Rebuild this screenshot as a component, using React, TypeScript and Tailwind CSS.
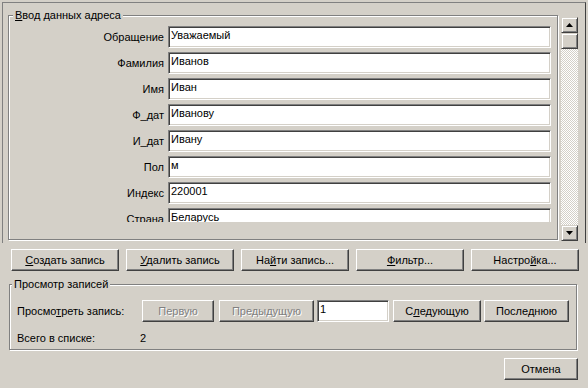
/* Классический диалог Windows: ввод данных адреса */

import type { ReactNode } from 'react';

const FIELDS: [ReactNode, string][] = [
  ['Обращение', 'Уважаемый'],
  ['Фамилия', 'Иванов'],
  ['Имя', 'Иван'],
  ['Ф_дат', 'Иванову'],
  ['И_дат', 'Ивану'],
  ['Пол', 'м'],
  ['Индекс', '220001'],
  ['Страна', 'Беларусь'],
];

/* ── Raised 3D button ──────────────────────────────── */

function Btn({ children, className = '', disabled = false }: { children: ReactNode; className?: string; disabled?: boolean }) {
  return (
    <div
      className={`flex h-[22px] shrink-0 items-center justify-center border border-t-white border-l-white border-r-[#404040] border-b-[#404040] shadow-[inset_-1px_-1px_0_#808080] ${
        disabled ? 'text-[#808080] [text-shadow:1px_1px_0_#fff]' : 'text-black'
      } ${className}`}
    >
      <span className="leading-[13px]">{children}</span>
    </div>
  );
}

/* ── Sunken text box ───────────────────────────────── */

function Field({ value, className = '' }: { value: string; className?: string }) {
  return (
    <div
      className={`h-[22px] shrink-0 border border-t-[#808080] border-l-[#808080] border-r-white border-b-white bg-white pl-[2px] pt-[2px] leading-[13px] text-black shadow-[inset_1px_1px_0_#404040,inset_-1px_-1px_0_#d4d0c8] ${className}`}
    >
      {value}
    </div>
  );
}

/* ── Scroll arrow ──────────────────────────────────── */

function Arrow({ down = false }: { down?: boolean }) {
  return (
    <svg width="7" height="4" viewBox="0 0 7 4" className={down ? 'rotate-180' : ''}>
      <path d="M3.5 0 L7 4 L0 4 Z" fill="#000" />
    </svg>
  );
}

function ScrollBtn({ children, className = '' }: { children?: ReactNode; className?: string }) {
  return (
    <div
      className={`flex h-[16px] w-full shrink-0 items-center justify-center border border-t-[#d4d0c8] border-l-[#d4d0c8] border-r-[#404040] border-b-[#404040] bg-[#d4d0c8] shadow-[inset_1px_1px_0_#fff,inset_-1px_-1px_0_#808080] ${className}`}
    >
      {children}
    </div>
  );
}

/* ── Main ──────────────────────────────────────────── */

export default function App() {
  return (
    <div className="h-[388px] w-[588px] overflow-hidden bg-[#d4d0c8] pt-[2px] font-['Liberation_Sans',Arial,sans-serif] text-[11px] text-black">
      {/* Scrolling panel: address entry group + scrollbar */}
      <div className="ml-[2px] flex h-[241px] w-[584px] items-start border-t border-l border-t-[#808080] border-l-[#808080] border-r border-r-[#404040] pl-[5px] pt-[12px]">
        <div className="relative h-[225px] w-[550px] shrink-0 border border-[#808080] shadow-[1px_1px_0_#fff,inset_1px_1px_0_#fff]">
          <span className="absolute -top-[7px] left-[4px] bg-[#d4d0c8] px-[2px] leading-[13px]">
            <u>В</u>вод данных адреса
          </span>
          <div className="flex h-[206px] flex-col gap-[4px] overflow-hidden pt-[10px]">
            {FIELDS.map(([label, value], i) => (
              <div key={i} className="flex shrink-0 items-center gap-[4px]">
                <span className="w-[155px] text-right leading-[13px]">{label}</span>
                <Field value={value} className="w-[383px]" />
              </div>
            ))}
          </div>
        </div>

        <div className="ml-[3px] mt-[2px] flex h-[224px] w-[17px] shrink-0 flex-col bg-[repeating-conic-gradient(#fff_0_25%,#d4d0c8_0_50%)] bg-[length:2px_2px]">
          <ScrollBtn>
            <Arrow />
          </ScrollBtn>
          <ScrollBtn />
          <div className="flex-1" />
          <ScrollBtn>
            <Arrow down />
          </ScrollBtn>
        </div>
      </div>

      {/* Record buttons */}
      <div className="mt-[6px] flex gap-[7px] pl-[11px]">
        <Btn className="w-[108px]">
          <u>С</u>оздать запись
        </Btn>
        <Btn className="w-[108px]">
          <u>У</u>далить запись
        </Btn>
        <Btn className="w-[108px]">
          На<u>й</u>ти запись...
        </Btn>
        <Btn className="w-[108px]">
          <u>Ф</u>ильтр...
        </Btn>
        <Btn className="w-[108px]">
          Настро<u>й</u>ка...
        </Btn>
      </div>

      {/* Browse group */}
      <div className="relative ml-[9px] mt-[13px] h-[66px] w-[568px] border border-[#808080] shadow-[1px_1px_0_#fff,inset_1px_1px_0_#fff]">
        <span className="absolute -top-[7px] left-[2px] bg-[#d4d0c8] px-[2px] leading-[13px]">Просмотр записей</span>
        <div className="flex items-center pl-[7px] pt-[15px]">
          <span className="w-[125px] leading-[13px]">
            Просмо<u>т</u>реть запись:
          </span>
          <Btn disabled className="w-[72px]">
            Первую
          </Btn>
          <Btn disabled className="ml-[5px] w-[95px]">
            Предыдущую
          </Btn>
          <Field value="1" className="ml-[3px] w-[72px]" />
          <Btn className="ml-[4px] w-[88px]">
            С<u>л</u>едующую
          </Btn>
          <Btn className="ml-[3px] w-[85px]">
            После<u>д</u>нюю
          </Btn>
        </div>
        <div className="mt-[10px] flex pl-[7px] leading-[13px]">
          <span className="w-[123px]">Всего в списке:</span>
          <span>2</span>
        </div>
      </div>

      {/* Footer */}
      <div className="mt-[8px] flex justify-end pr-[10px]">
        <Btn className="w-[74px]">Отмена</Btn>
      </div>
    </div>
  );
}
